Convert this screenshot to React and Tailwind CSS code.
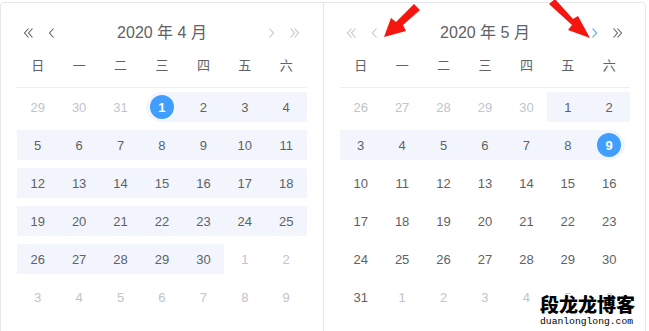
import React from "react";

const FONT = { fontFamily: '"Liberation Sans", Arial, "Noto Sans CJK SC", sans-serif' };

function Chev({ dir = "left", double = false, color }) {
  const w = double ? 9 : 5;
  const one = (ox) =>
    dir === "left"
      ? `M${ox + 4.5} 0.5 L${ox + 0.5} 5 L${ox + 4.5} 9.5`
      : `M${ox + 0.5} 0.5 L${ox + 4.5} 5 L${ox + 0.5} 9.5`;
  return (
    <svg width={w + 1} height="10" viewBox={`0 0 ${w + 1} 10`} fill="none">
      <path d={one(0)} stroke={color} strokeWidth="1.1" />
      {double && <path d={one(4)} stroke={color} strokeWidth="1.1" />}
    </svg>
  );
}

const DARK = "#606266";
const LIGHT = "#c0c4cc";

const leftRows = [
  [["29", "o"], ["30", "o"], ["31", "o"], ["1", "s"], ["2", "r"], ["3", "r"], ["4", "r"]],
  [["5", "r"], ["6", "r"], ["7", "r"], ["8", "r"], ["9", "r"], ["10", "r"], ["11", "r"]],
  [["12", "r"], ["13", "r"], ["14", "r"], ["15", "r"], ["16", "r"], ["17", "r"], ["18", "r"]],
  [["19", "r"], ["20", "r"], ["21", "r"], ["22", "r"], ["23", "r"], ["24", "r"], ["25", "r"]],
  [["26", "r"], ["27", "r"], ["28", "r"], ["29", "r"], ["30", "r"], ["1", "o"], ["2", "o"]],
  [["3", "o"], ["4", "o"], ["5", "o"], ["6", "o"], ["7", "o"], ["8", "o"], ["9", "o"]],
];

const rightRows = [
  [["26", "o"], ["27", "o"], ["28", "o"], ["29", "o"], ["30", "o"], ["1", "r"], ["2", "r"]],
  [["3", "r"], ["4", "r"], ["5", "r"], ["6", "r"], ["7", "r"], ["8", "r"], ["9", "e"]],
  [["10", "n"], ["11", "n"], ["12", "n"], ["13", "n"], ["14", "n"], ["15", "n"], ["16", "n"]],
  [["17", "n"], ["18", "n"], ["19", "n"], ["20", "n"], ["21", "n"], ["22", "n"], ["23", "n"]],
  [["24", "n"], ["25", "n"], ["26", "n"], ["27", "n"], ["28", "n"], ["29", "n"], ["30", "n"]],
  [["31", "n"], ["1", "o"], ["2", "o"], ["3", "o"], ["4", "o"], ["5", "o"], ["6", "o"]],
];

const WEEK = ["日", "一", "二", "三", "四", "五", "六"];

function Cell({ text, kind }) {
  const band =
    kind === "r"
      ? "bg-[#f2f6fc]"
      : kind === "s"
      ? "bg-[#f2f6fc] ml-[5px] rounded-l-[15px]"
      : kind === "e"
      ? "bg-[#f2f6fc] mr-[5px] rounded-r-[15px]"
      : "";
  const sel = kind === "s" || kind === "e";
  return (
    <div className="relative flex-1 h-[38px] py-[4px]">
      <div className={`h-[30px] ${band}`} />
      <div className="absolute inset-0 flex items-center justify-center">
        <span
          className={`w-[24px] h-[24px] rounded-full flex items-center justify-center text-[13px] leading-none ${
            sel ? "bg-[#409eff] text-white font-bold" : kind === "o" ? "text-[#c0c4cc]" : "text-[#606266]"
          }`}
        >
          {text}
        </span>
      </div>
    </div>
  );
}

function Panel({ title, rows, leftColors, rightColors, className }) {
  return (
    <div className={className}>
      <div className="flex items-center h-[28px]">
        <div className="flex items-center">
          <div className="w-[24px] flex justify-center">
            <Chev dir="left" double color={leftColors[0]} />
          </div>
          <div className="w-[22px] flex justify-center">
            <Chev dir="left" color={leftColors[1]} />
          </div>
        </div>
        <div className="flex-1 text-center text-[16px] text-[#606266] leading-[28px]">{title}</div>
        <div className="flex items-center">
          <div className="w-[22px] flex justify-center">
            <Chev dir="right" color={rightColors[0]} />
          </div>
          <div className="w-[24px] flex justify-center">
            <Chev dir="right" double color={rightColors[1]} />
          </div>
        </div>
      </div>
      <div className="flex h-[41px] pb-[2px] border-b border-[#ebeef5]">
        {WEEK.map((w) => (
          <div key={w} className="flex-1 flex items-center justify-center text-[13px] text-[#606266]">
            {w}
          </div>
        ))}
      </div>
      {rows.map((r, i) => (
        <div key={i} className="flex">
          {r.map(([t, k], j) => (
            <Cell key={j} text={t} kind={k} />
          ))}
        </div>
      ))}
    </div>
  );
}

export default function App() {
  return (
    <div className="relative w-[649px] h-[331px] overflow-hidden bg-white" style={FONT}>
      <div className="mt-[2px] w-[646px] h-[340px] border border-[#e4e7ed] rounded-[4px] flex bg-white">
        <Panel
          title="2020 年 4 月"
          rows={leftRows}
          leftColors={[DARK, DARK]}
          rightColors={[LIGHT, LIGHT]}
          className="w-[323px] pl-[16px] pr-[16px] pt-[16px] border-r border-[#e4e7ed]"
        />
        <Panel
          title="2020 年 5 月"
          rows={rightRows}
          leftColors={[LIGHT, LIGHT]}
          rightColors={["#409eff", DARK]}
          className="w-[321px] pl-[16px] pr-[15px] pt-[16px]"
        />
      </div>

      {/* red annotation arrows */}
      <svg className="absolute left-0 top-0 pointer-events-none" width="649" height="60">
        <polygon points="414,4 420,10 403,25 406,31 384,37 391,18 396,22" fill="#f5160f" />
        <polygon points="549,4 555,-1 573,19 578,16 590,38 568,30 572,25" fill="#f5160f" />
      </svg>

      {/* watermark */}
      <div className="absolute left-[540px] top-[294px] flex flex-col items-start">
        <div
          className="text-[19px] leading-[20px] text-black"
          style={{
            fontFamily: '"Noto Sans CJK SC", sans-serif',
            fontWeight: 900,
            textShadow: "0 0 2px #fff, 0 0 2px #fff, 0 0 3px #fff",
          }}
        >
          段龙龙博客
        </div>
        <div
          className="text-[9.7px] leading-[10px] mt-[3px] text-black"
          style={{ fontFamily: '"Liberation Mono", monospace', textShadow: "0 0 2px #fff, 0 0 2px #fff" }}
        >
          duanlonglong.com
        </div>
      </div>
    </div>
  );
}
